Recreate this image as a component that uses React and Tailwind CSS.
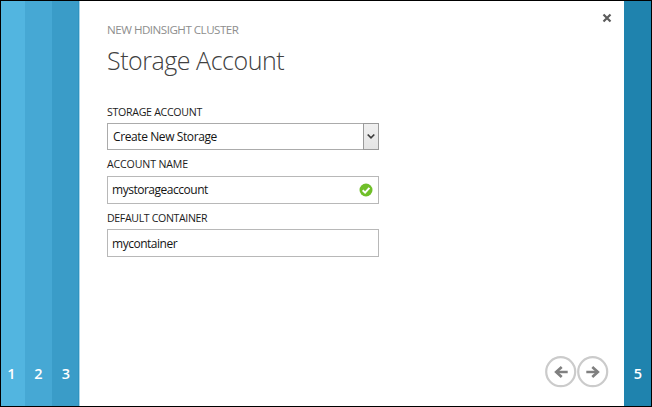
import React from "react";

function Step({ n, className }) {
  return (
    <div className={`flex items-end justify-center pb-[21px] text-[14.5px] leading-[22px] font-semibold text-white ${className}`}>
      {n}
    </div>
  );
}

function Label({ children, className }) {
  return (
    <div className={`h-[16px] whitespace-nowrap text-[10.6px] leading-[16px] text-[#1c1c1c] ${className}`}>
      {children}
    </div>
  );
}

function ArrowButton({ back }) {
  return (
    <svg width="32" height="32" viewBox="0 0 32 32" fill="none" className="block">
      <circle cx="15.7" cy="15.7" r="14.5" stroke="#cbcbcb" strokeWidth="2.2" />
      <g stroke="#808080" strokeWidth="2.5" transform={back ? "matrix(-1 0 0 1 32 0)" : undefined}>
        <path d="M9.3 16H21" />
        <path d="M15.3 11l5.5 5-5.5 5" strokeWidth="2.7" />
      </g>
    </svg>
  );
}

export default function App() {
  return (
    <div className="flex h-[407px] w-[652px] overflow-hidden border border-black bg-white font-['Open_Sans','Noto_Sans',sans-serif]">
      <Step n="1" className="w-[24px] bg-[#52b5e0] pr-[3px]" />
      <Step n="2" className="w-[27px] bg-[#46a8d4]" />
      <Step n="3" className="w-[27px] border-r border-[#2f94c1] bg-[#3a9cc8] pl-[2px]" />
      <main className="flex flex-1 flex-col border-l border-[#a9d5ea] pl-[27px]">
        <header className="flex h-[80px] justify-between">
          <div className="pt-[20px]">
            <div className="h-[18px] whitespace-nowrap text-[11.6px] leading-[18px] tracking-[-0.5px] text-[#8e8e8e]">
              NEW HDINSIGHT CLUSTER
            </div>
            <h1 className="mt-[2px] whitespace-nowrap text-[25px] leading-[38px] font-light tracking-[-0.47px] text-[#404040]">
              Storage Account
            </h1>
          </div>
          <svg width="10" height="10" viewBox="0 0 10 10" className="mt-[12px] mr-[12px]">
            <path d="M1.5 1.5l7 7M8.5 1.5l-7 7" stroke="#5c5c5c" strokeWidth="2.2" />
          </svg>
        </header>
        <form className="flex w-[272px] flex-col pt-[23px] text-[12px] text-[#141414]">
          <Label className="tracking-[-0.29px]">STORAGE ACCOUNT</Label>
          <div className="mt-[3px] flex h-[27px] w-[272px] justify-between border border-[#ababab] bg-white">
            <span className="pl-[5px] leading-[26px] tracking-[-0.4px]">Create New Storage</span>
            <span className="-m-px flex w-[16px] items-center justify-center border border-[#9a9a9a] bg-linear-to-b from-[#f0f0f0] to-[#e4e4e4]">
              <svg width="10" height="7" viewBox="0 0 10 7" fill="none">
                <path d="M1.7 1.5L5 4.8l3.3-3.3" stroke="#3c3c3c" strokeWidth="1.7" />
              </svg>
            </span>
          </div>
          <Label className="mt-[6px] tracking-[-0.14px]">ACCOUNT NAME</Label>
          <div className="mt-[4px] flex h-[28px] items-center justify-between border border-[#b8b8b8] bg-white pr-[5px] pl-[4px]">
            <span className="tracking-[-0.48px]">mystorageaccount</span>
            <svg width="14" height="14" viewBox="0 0 14 14" fill="none">
              <circle cx="7" cy="7" r="6.5" fill="#70bf29" />
              <path d="M3.7 7.2l2.4 2.4 4.3-4.8" stroke="#fff" strokeWidth="2" />
            </svg>
          </div>
          <Label className="mt-[6px] tracking-[-0.36px]">DEFAULT CONTAINER</Label>
          <div className="mt-[3px] flex h-[28px] items-center border border-[#b8b8b8] bg-white pl-[4px]">
            <span className="pt-px tracking-[-0.48px]">mycontainer</span>
          </div>
        </form>
        <footer className="mt-auto flex justify-end pr-[15px] pb-[18px]">
          <ArrowButton back />
          <ArrowButton />
        </footer>
      </main>
      <Step n="5" className="w-[27px] bg-[#1f83ae] pl-px" />
    </div>
  );
}
